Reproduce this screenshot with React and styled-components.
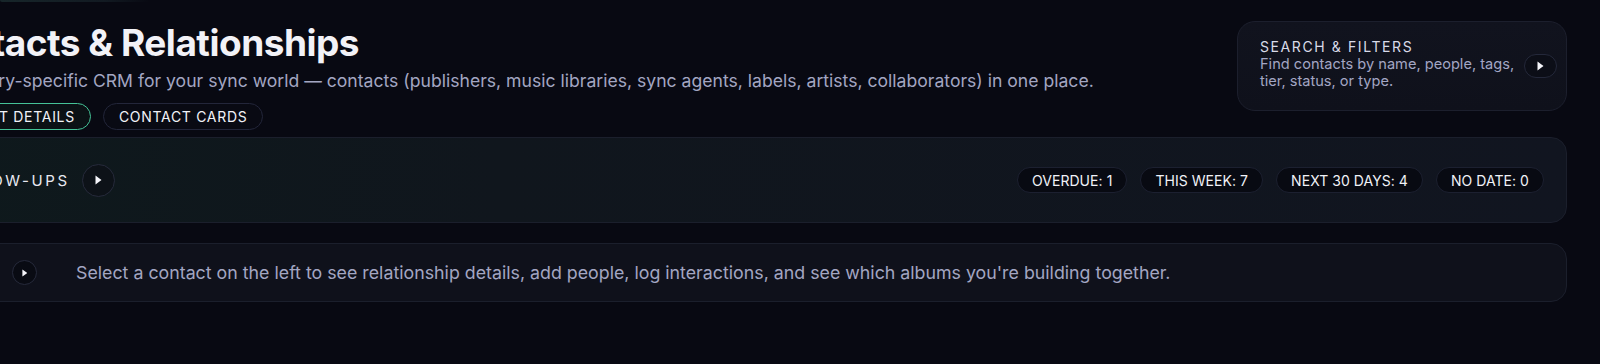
import styled, { createGlobalStyle } from 'styled-components';

const GlobalStyle = createGlobalStyle`
  html, body {
    margin: 0;
    padding: 0;
    background: #080912;
    overflow: hidden;
  }
  body {
    font-family: Inter, "Noto Sans", "Liberation Sans", sans-serif;
    color: #eef0f6;
  }
`;

const Page = styled.div`
  width: 1600px;
  height: 364px;
  padding: 0 33px 0 0;
  box-sizing: border-box;
`;

const TopGlow = styled.div`
  width: 150px;
  height: 2px;
  background: linear-gradient(90deg, #17262a, #121a22 70%, rgba(18, 26, 34, 0));
  border-radius: 0 0 2px 2px;
`;

const Main = styled.main`
  margin-left: -80px;
  padding-top: 18px;
  display: flex;
  flex-direction: column;
`;

const Header = styled.header`
  display: flex;
  justify-content: space-between;
  align-items: flex-start;
  margin-bottom: 7px;
`;

const Intro = styled.div`
  display: flex;
  flex-direction: column;
`;

const Title = styled.h1`
  margin: 0;
  font-size: 37px;
  line-height: 45px;
  font-weight: 700;
  letter-spacing: -0.5px;
  color: #f2f2f7;
`;

const Subtitle = styled.p`
  margin: 3px 0 10px;
  font-size: 17.6px;
  line-height: 25px;
  color: #a3a6c2;
`;

const Tabs = styled.div`
  display: flex;
  gap: 12px;
`;

const Tab = styled.button`
  height: 27px;
  padding: 0 15px;
  box-sizing: border-box;
  border-radius: 14px;
  border: 1px solid ${p => (p.$active ? '#45c397' : '#23263a')};
  background: ${p => (p.$active ? '#0b1115' : '#090a13')};
  color: #f1f2f8;
  font-family: inherit;
  font-size: 14px;
  letter-spacing: 0.7px;
  text-transform: uppercase;
  cursor: pointer;
`;

const SearchCard = styled.section`
  width: 330px;
  height: 90px;
  margin-top: 1px;
  box-sizing: border-box;
  padding: 0 9px 0 22px;
  display: flex;
  align-items: center;
  justify-content: space-between;
  border-radius: 18px;
  border: 1px solid #1c1f2d;
  background: linear-gradient(180deg, #11131e, #0f111b);
`;

const SearchText = styled.div`
  width: 266px;
  display: flex;
  flex-direction: column;
  margin-top: -4px;
`;

const CardLabel = styled.div`
  font-size: 14px;
  line-height: 18px;
  letter-spacing: 1.6px;
  text-transform: uppercase;
  color: #d9dbe8;
`;

const CardDesc = styled.div`
  font-size: 14.6px;
  line-height: 17px;
  color: #a3a6c4;
`;

const PillArrow = styled.button`
  width: 33px;
  height: 24px;
  flex: none;
  border-radius: 12px;
  border: 1px solid #24283a;
  background: #0c0e17;
  display: flex;
  align-items: center;
  justify-content: center;
  padding: 0;
  cursor: pointer;
`;

const CircleArrow = styled.button`
  width: ${p => p.$size}px;
  height: ${p => p.$size}px;
  flex: none;
  border-radius: 50%;
  border: 1px solid #262a3b;
  background: ${p => p.$bg};
  display: flex;
  align-items: center;
  justify-content: center;
  padding: 0;
  cursor: pointer;
`;

const Panel = styled.section`
  display: flex;
  align-items: center;
  border-radius: 16px;
  border: 1px solid #1b1f2c;
  box-sizing: border-box;
`;

const FollowUps = styled(Panel)`
  height: 86px;
  padding: 0 22px 0 23px;
  gap: 12px;
  background: linear-gradient(90deg, #0e191c 0%, #10161d 35%, #111520 100%);
`;

const Select = styled(Panel)`
  height: 59px;
  margin-top: 20px;
  padding: 0 0 0 91px;
  gap: 39px;
  background: #0f111b;
`;

const PanelTitle = styled.h2`
  margin: 0;
  font-size: 15px;
  font-weight: 400;
  letter-spacing: 2.6px;
  text-transform: uppercase;
  color: #e8e9f2;
`;

const Counts = styled.div`
  margin-left: auto;
  display: flex;
  gap: 13px;
`;

const Count = styled.span`
  height: 26px;
  padding: 0 14px;
  display: flex;
  align-items: center;
  box-sizing: border-box;
  border-radius: 13px;
  border: 1px solid #1c2030;
  background: #080a12;
  font-size: 14px;
  letter-spacing: 0.05px;
  color: #f0f1f7;
  text-transform: uppercase;
`;

const Hint = styled.p`
  margin: 0;
  font-size: 17.8px;
  color: #a3a6c2;
`;

function Caret({ size = 8 }) {
  return (
    <svg width={size * 0.7} height={size} viewBox="0 0 7 10">
      <polygon points="0.5,0.5 6.5,5 0.5,9.5" fill="#f5f5fa" />
    </svg>
  );
}

const counts = [
  ['Overdue', 1],
  ['This week', 7],
  ['Next 30 days', 4],
  ['No date', 0],
];

export default function App() {
  return (
    <Page>
      <GlobalStyle />
      <TopGlow />
      <Main>
        <Header>
          <Intro>
            <Title>Contacts &amp; Relationships</Title>
            <Subtitle>
              An industry-specific CRM for your sync world — contacts (publishers, music libraries, sync agents, labels, artists, collaborators) in one place.
            </Subtitle>
            <Tabs>
              <Tab $active>Contact details</Tab>
              <Tab>Contact cards</Tab>
            </Tabs>
          </Intro>
          <SearchCard>
            <SearchText>
              <CardLabel>Search &amp; Filters</CardLabel>
              <CardDesc>Find contacts by name, people, tags, tier, status, or type.</CardDesc>
            </SearchText>
            <PillArrow><Caret size={10} /></PillArrow>
          </SearchCard>
        </Header>

        <FollowUps>
          <PanelTitle>Follow-ups</PanelTitle>
          <CircleArrow $size={33} $bg="#0d1218"><Caret size={10} /></CircleArrow>
          <Counts>
            {counts.map(([label, n]) => (
              <Count key={label}>{label}: {n}</Count>
            ))}
          </Counts>
        </FollowUps>

        <Select>
          <CircleArrow $size={25} $bg="#090b13"><Caret size={8} /></CircleArrow>
          <Hint>
            Select a contact on the left to see relationship details, add people, log interactions, and see which albums you're building together.
          </Hint>
        </Select>
      </Main>
    </Page>
  );
}
